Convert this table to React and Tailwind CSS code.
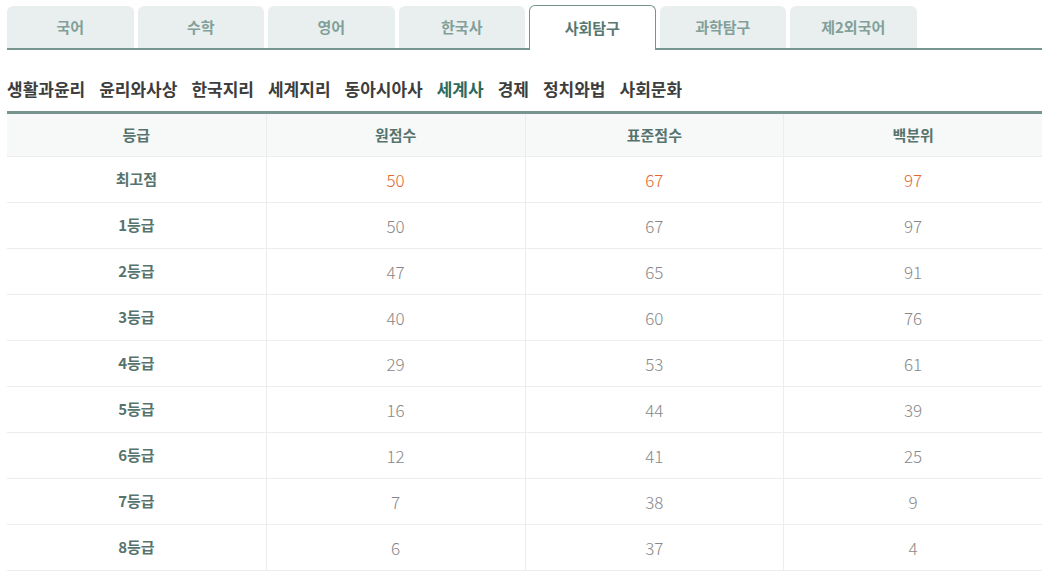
import React from "react";

const tabs = ["국어", "수학", "영어", "한국사", "사회탐구", "과학탐구", "제2외국어"];
const subjects = ["생활과윤리", "윤리와사상", "한국지리", "세계지리", "동아시아사", "세계사", "경제", "정치와법", "사회문화"];

const rows = [
  ["최고점", "50", "67", "97"],
  ["1등급", "50", "67", "97"],
  ["2등급", "47", "65", "91"],
  ["3등급", "40", "60", "76"],
  ["4등급", "29", "53", "61"],
  ["5등급", "16", "44", "39"],
  ["6등급", "12", "41", "25"],
  ["7등급", "7", "38", "9"],
  ["8등급", "6", "37", "4"],
];

const App = () => {
  return (
    <div
      className="w-[1046px] h-[574px] bg-white overflow-hidden pl-[7px] pr-[4px]"
      style={{ fontFamily: '"Noto Sans CJK KR", "Noto Sans", sans-serif' }}
    >
      {/* tabs */}
      <div className="flex items-end gap-[4px] pt-[5px] border-b-2 border-[#76958f] h-[50px]">
        {tabs.map((t) => {
          const active = t === "사회탐구";
          return active ? (
            <div
              key={t}
              className="w-[126.5px] h-[45px] -mb-[2px] flex items-center justify-center bg-white border border-b-0 border-[#76958f] rounded-t-[6px] text-[15px] font-bold text-[#587871]"
            >
              {t}
            </div>
          ) : (
            <div
              key={t}
              className="w-[126.5px] h-[42px] flex items-center justify-center bg-[#e9efee] rounded-t-[6px] text-[15px] font-semibold text-[#82a099]"
            >
              {t}
            </div>
          );
        })}
      </div>

      {/* subjects */}
      <div className="flex gap-[14px] h-[61px] items-center pt-[16px] text-[17px] font-semibold text-[#3d3d3d]">
        {subjects.map((s) => (
          <span key={s} className={s === "세계사" ? "text-[#2c6a5c] font-bold" : ""}>
            {s}
          </span>
        ))}
      </div>

      {/* table */}
      <div className="border-t-[3px] border-[#76958f]">
        <div className="grid grid-cols-4 h-[43px] bg-[#f7f9f9] border-b border-[#ebeeed] text-[15px] font-bold text-[#56736d]">
          {["등급", "원점수", "표준점수", "백분위"].map((h, i) => (
            <div key={h} className={`flex items-center justify-center ${i > 0 ? "border-l border-[#ebeeed]" : ""}`}>
              {h}
            </div>
          ))}
        </div>
        {rows.map((r, ri) => (
          <div key={r[0]} className="grid grid-cols-4 h-[46px] border-b border-[#ebeeed]">
            {r.map((c, i) => (
              <div
                key={i}
                className={`flex items-center justify-center ${i > 0 ? "border-l border-[#ebeeed]" : ""} ${
                  i === 0
                    ? "text-[15px] font-bold text-[#56736d]"
                    : ri === 0
                    ? "text-[17px] font-extralight text-[#e5672f]"
                    : "text-[17px] font-extralight text-[#888888]"
                }`}
              >
                {c}
              </div>
            ))}
          </div>
        ))}
      </div>
    </div>
  );
};

export default App;
